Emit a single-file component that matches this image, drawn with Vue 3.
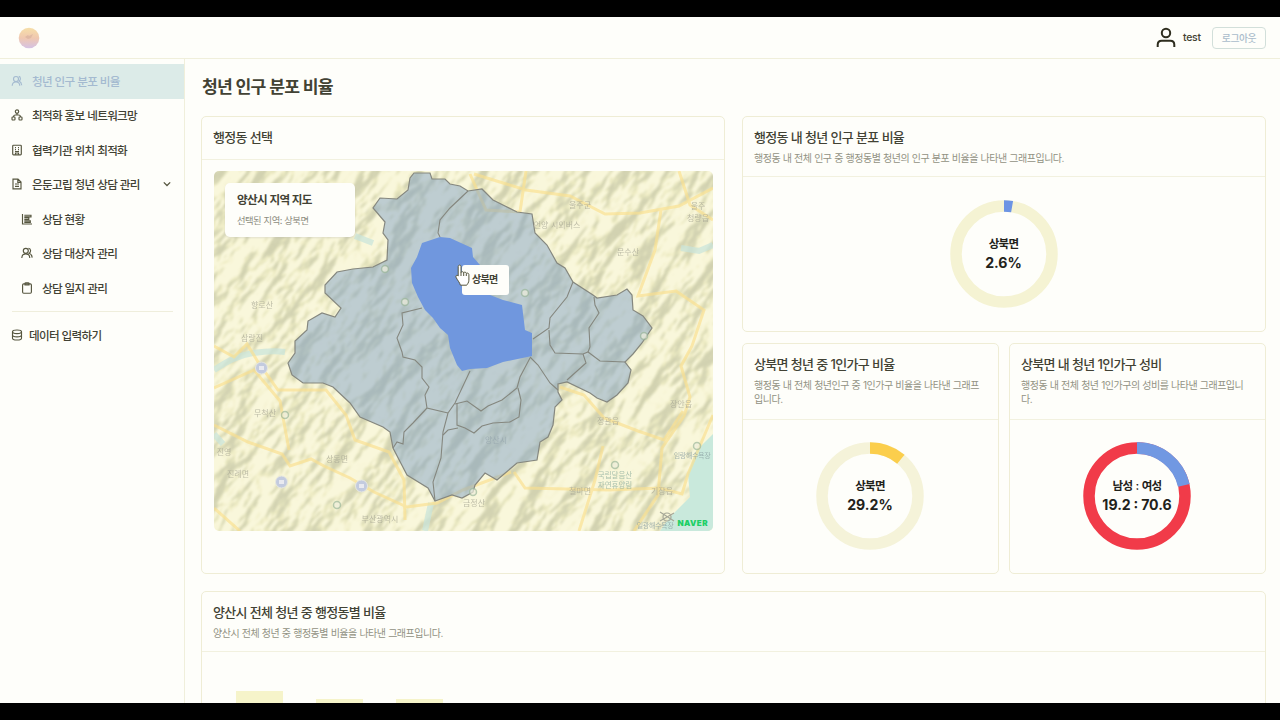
<script setup>
const outer = '414,173 430,173 432,179 445,179 450,184 460,186 468,191 482,189 493,200 505,206 517,212 532,214 535,233 547,245 557,263 565,268 573,282 593,295 597,298 617,295 627,289 632,295 633,310 643,316 652,328 642,343 633,354 625,362 631,370 628,383 617,395 607,402 597,398 590,393 567,382 558,384 558,392 562,400 555,407 553,425 548,437 540,442 537,460 517,463 497,480 485,473 475,485 473,492 462,498 452,495 435,501 428,488 407,475 393,448 390,432 383,427 360,417 350,403 333,387 323,383 303,383 292,375 288,363 295,353 295,341 307,330 308,321 322,313 335,317 341,308 325,293 325,285 337,272 353,269 373,267 387,260 388,240 383,233 385,222 373,208 380,198 397,199 408,190 410,178'
const selected = '440,237 422,243 417,257 411,268 412,283 418,297 425,310 433,318 440,328 448,335 450,348 457,365 462,371 470,369 487,368 503,362 532,356 532,333 525,330 522,305 503,300 490,295 480,265 473,257 472,248 450,238'
const borders = [
  '468,191 450,208 440,220 438,233 440,237',
  '422,308 402,313 403,325 397,338 402,352 403,357 415,360 422,367 422,378 429,387 425,395 427,408 448,413',
  '427,408 413,423 404,432 403,444 397,442 393,448',
  '470,371 455,403 448,413 443,432 441,458 433,482 435,501',
  '455,404 467,401 481,411 488,406 502,400 517,388 520,377 530,358',
  '457,403 457,425 465,428 474,433 482,426 493,423 510,422 519,417 521,400 518,388',
  '443,435 448,430 458,428',
  '530,357 538,365 550,383 558,390',
  '573,282 567,297 550,318 549,328 533,339',
  '549,330 550,345 555,353 583,354 588,352 600,361 625,362',
  '594,297 595,305 599,313 589,328 590,347 588,352',
  '583,354 586,363 567,380',
]
const places = [
  { x: 262, y: 308, t: '향로산' }, { x: 252, y: 341, t: '삼랑진' }, { x: 265, y: 416, t: '무척산' },
  { x: 224, y: 455, t: '진영' }, { x: 238, y: 477, t: '진례면' }, { x: 337, y: 462, t: '상동면' },
  { x: 380, y: 522, t: '부산광역시' }, { x: 580, y: 208, t: '울주군' }, { x: 557, y: 228, t: '언양 시외버스' },
  { x: 628, y: 255, t: '문수산' }, { x: 698, y: 209, t: '울주' }, { x: 698, y: 221, t: '청량읍' },
  { x: 608, y: 424, t: '정관읍' }, { x: 681, y: 407, t: '장안읍' }, { x: 580, y: 494, t: '철마면' },
  { x: 662, y: 494, t: '기장읍' }, { x: 496, y: 443, t: '양산시' }, { x: 474, y: 506, t: '금정산' },
]
const roads = [
  'M214 425L248 442L282 454L290 466L311 459L324 466L350 478L374 492L407 507L437 503L463 490L511 472',
  'M214 346L234 357L247 344L258 362L278 390L326 390L346 415L355 440L389 452L404 480L405 520',
  'M474 174L526 190L570 196L605 214L640 213L679 206L713 188M526 171L520 212L486 210L470 174',
  'M679 171L690 205L713 220M661 210L655 250L638 296L676 291L704 310L692 346L681 366L690 397L684 416L662 448L658 495L634 531',
  'M560 387L584 395L604 418L638 431L664 440L683 411M514 472L525 488L609 490L660 488L682 494L688 474L713 415',
  'M603 446L595 480L579 531M214 388L254 370L280 401L289 450M214 508L240 531',
]
const pins = [[285, 415], [337, 505], [615, 465], [697, 446], [525, 293], [405, 302], [385, 269], [473, 492], [644, 336]]
const bars = [{ h: 12 }, { h: 4 }, { h: 4 }]
const C = 2 * Math.PI * 48
</script>

<template>
  <div class="screen">
    <header class="top">
      <svg class="logo" viewBox="0 0 22 22"><defs><linearGradient id="lg" x2="0" y2="1"><stop offset="0" stop-color="#f6dfa8" /><stop offset=".5" stop-color="#f0c8b0" /><stop offset="1" stop-color="#d5c2e4" /></linearGradient></defs><circle cx="11" cy="11" r="10.3" fill="url(#lg)" /><path d="M7 10l3-2 1 1 4-2-2 4-3 1z" fill="#d9b29f" opacity=".7" /></svg>
      <div class="account">
        <svg class="user" viewBox="0 0 20 22" fill="none" stroke="#2e2d1e" stroke-width="2"><circle cx="10" cy="6" r="4.2" /><path d="M1.7 20v-2.3c0-2.5 1.5-3.9 4-3.9h8.6c2.5 0 4 1.4 4 3.9V20" /></svg>
        <span class="name">test</span>
        <button class="logout">로그아웃</button>
      </div>
    </header>
    <div class="body">
      <nav class="side">
        <div class="item active">
          <svg viewBox="0 0 12 12"><circle cx="5" cy="4" r="2.5" /><path d="M1.2 10.8C1.3 8.4 2.7 7 5 7s3.7 1.4 3.8 3.8M7.8 1.4c2 .3 2.2 3.5.3 4.7 1.7.8 2.4 2 2.6 4.2" /></svg>
          <span>청년 인구 분포 비율</span>
        </div>
        <div class="item">
          <svg viewBox="0 0 12 12"><circle cx="6" cy="2.6" r="1.7" /><rect x="1" y="8" width="3" height="3" rx=".7" /><rect x="8" y="8" width="3" height="3" rx=".7" /><path d="M6 4.3v2M2.5 8c0-1.7.8-2 2-2h3c1.2 0 2 .3 2 2" /></svg>
          <span>최적화 홍보 네트워크망</span>
        </div>
        <div class="item">
          <svg viewBox="0 0 12 12"><rect x="1.7" y="1.2" width="8.6" height="9.6" rx=".8" /><path d="M4 3.6h1M7 3.6h1M4 5.6h1M7 5.6h1M4 7.5h4M4.5 10.8V9h3v1.8" /></svg>
          <span>협력기관 위치 최적화</span>
        </div>
        <div class="item">
          <svg viewBox="0 0 12 12"><path d="M2 1.1h5l3 3v6.8H2zM6.8 1.2v3.1H10M4 6h4M4 8.3h4" /></svg>
          <span>은둔고립 청년 상담 관리</span>
          <svg class="chev" viewBox="0 0 12 12"><path d="M2.8 4.4L6 7.5l3.2-3.1" /></svg>
        </div>
        <div class="item sub">
          <svg viewBox="0 0 12 12"><path d="M1.5 1v10H11M3.3 2.2H10v1.6H3.3M3.3 5h4.5v1.5H3.3M3.3 7.8h6v1.6h-6" /></svg>
          <span>상담 현황</span>
        </div>
        <div class="item sub">
          <svg viewBox="0 0 12 12"><circle cx="4.8" cy="3.8" r="2.5" /><path d="M.8 10.9c.1-2.5 1.6-4 4-4s3.900 1.500 4 4M7.4 1.300c2.600.1 2.900 3.600.7 4.900 2 .7 2.900 2.200 3.100 4.400" /></svg>
          <span>상담 대상자 관리</span>
        </div>
        <div class="item sub">
          <svg viewBox="0 0 12 12"><rect x="1.6" y="1.900" width="8.800" height="9.300" rx="1.100" /><path d="M4 2.900V1.500Q4 .8 4.800.8h2.400q.8 0 .8.7v1.400z" /></svg>
          <span>상담 일지 관리</span>
        </div>
        <div class="rule"></div>
        <div class="item data">
          <svg viewBox="0 0 12 12"><ellipse cx="6" cy="2.800" rx="4.500" ry="1.800" /><path d="M1.500 2.800v6.400c0 1 2 1.800 4.500 1.800s4.500-.8 4.500-1.800V2.800M1.500 6c0 1 2 1.800 4.500 1.800S10.500 7 10.500 6" /></svg>
          <span>데이터 입력하기</span>
        </div>
      </nav>
      <main>
        <h1>청년 인구 분포 비율</h1>
        <div class="row">
          <section class="card region">
            <div class="head single"><h2>행정동 선택</h2></div>
            <div class="map">
              <svg class="terrain" viewBox="214 171 499 360">
                <defs>
                  <filter id="relief" x="0" y="0" width="1" height="1" color-interpolation-filters="sRGB">
                    <feTurbulence type="fractalNoise" baseFrequency=".018 .042" numOctaves="4" seed="11" result="n" />
                    <feDiffuseLighting in="n" surfaceScale="16" diffuseConstant="1.150" lighting-color="#fff"><feDistantLight azimuth="260" elevation="58" /></feDiffuseLighting>
                    <feComponentTransfer><feFuncR type="table" tableValues=".82 .83 .84 .88 .94 .98" /><feFuncG type="table" tableValues=".82 .83 .84 .88 .93 .97" /><feFuncB type="table" tableValues=".69 .70 .71 .73 .77 .86" /></feComponentTransfer>
                    <feGaussianBlur stdDeviation=".8" />
                  </filter>
                </defs>
                <rect x="90" y="10" width="750" height="690" filter="url(#relief)" transform="rotate(-52 463 351)" />
                <path d="M713 434L696 451L688 474L690 497L670 517L660 531H713z" fill="#c9e9dc" />
                <path d="M214 370Q234 356 253 353T285 352M355 236l18 7M681 248l18 3 14-6M431 503l-6 28M214 434l9 10" fill="none" stroke="#c8e4dc" stroke-width="6" opacity=".7" />
                <g fill="none" stroke="#fbe08e" stroke-width="3" opacity=".65"><path v-for="r in roads" :key="r" :d="r" /></g>
                <g class="places"><text v-for="p in places" :key="p.t" :x="p.x" :y="p.y">{{ p.t }}</text></g>
                <g class="badges" fill="#c3cbdf" stroke="#e7e8e0"><circle cx="261.500" cy="368" r="6" /><circle cx="281.500" cy="482" r="6" /><circle cx="361.500" cy="486" r="6" /></g>
                <g fill="#e9eaf0"><rect x="259" y="366" width="5" height="4" /><rect x="279" y="480" width="5" height="4" /><rect x="359" y="484" width="5" height="4" /></g>
                <g class="places green"><text x="615" y="478">국립달음산</text><text x="615" y="488">자연휴양림</text></g>
                <text class="sea" x="692" y="458">임랑해수욕장</text>
                <text class="sea" x="655" y="528">일광해수욕장</text>
                <polygon :points="outer" fill="#7e9fc6" fill-opacity=".48" stroke="#85877f" stroke-width="1.200" />
                <g fill="none" stroke="#85877f" stroke-width="1.100"><polyline v-for="b in borders" :key="b" :points="b" /></g>
                <polygon :points="selected" fill="#7097de" />
                <g fill="#eeeedc" stroke="#9db89c" stroke-width="1.500" opacity=".7"><circle v-for="p in pins" :key="p[0]" :cx="p[0]" :cy="p[1]" r="3.500" /></g>
                <g fill="none" stroke="#a6a797" stroke-width="1.200"><circle cx="667" cy="517" r="4" /><path d="M660 512l14 9M660 521l14-8" /></g>
                <text class="naver" x="677.500" y="526" textLength="30">NAVER</text>
              </svg>
              <div class="info"><strong>양산시 지역 지도</strong><span>선택된 지역: 상북면</span></div>
              <div class="tip">상북면</div>
              <svg class="hand" viewBox="0 0 16 23"><path d="M3.200 12V2.600c0-2 2.800-2 2.800 0v6c.2-1.300 2.600-1.200 2.700.2.500-1 2.500-.8 2.600.6.8-.8 2.600-.2 2.600 1.200v5.600c0 2.400-1.600 4-2.200 5H5.400C4.800 18.500 2.200 16 1 13.200c-.8-1.900 1.200-2.500 2.200-1.200z" fill="#fff" stroke="#56563e" /><path d="M6 8.500V12M8.700 9v3M11.300 9.700V12" stroke="#56563e" /></svg>
            </div>
          </section>
          <div class="stats">
            <section class="card wide">
              <div class="head"><h2>행정동 내 청년 인구 분포 비율</h2><p>행정동 내 전체 인구 중 행정동별 청년의 인구 분포 비율을 나타낸 그래프입니다.</p></div>
              <div class="chart">
                <svg viewBox="0 0 108 108" fill="none" stroke-width="11.500"><circle cx="54" cy="54" r="48" stroke="#f5f3d3" /><circle cx="54" cy="54" r="48" stroke="#6c94e4" :stroke-dasharray="`${C * 0.027} ${C}`" transform="rotate(-90 54 54)" /></svg>
                <div class="label"><b>상북면</b><strong>2.6%</strong></div>
              </div>
            </section>
            <div class="pair">
              <section class="card">
                <div class="head tall"><h2>상북면 청년 중 1인가구 비율</h2><p>행정동 내 전체 청년인구 중 1인가구 비율을 나타낸 그래프<br>입니다.</p></div>
                <div class="chart">
                  <svg viewBox="0 0 108 108" fill="none" stroke-width="11.500"><circle cx="54" cy="54" r="48" stroke="#f5f3d9" /><circle cx="54" cy="54" r="48" stroke="#fbce4c" :stroke-dasharray="`${C * 0.111} ${C}`" transform="rotate(-90 54 54)" /></svg>
                  <div class="label"><b>상북면</b><strong>29.2%</strong></div>
                </div>
              </section>
              <section class="card">
                <div class="head tall"><h2>상북면 내 청년 1인가구 성비</h2><p>행정동 내 전체 청년 1인가구의 성비를 나타낸 그래프입니<br>다.</p></div>
                <div class="chart">
                  <svg viewBox="0 0 108 108" fill="none" stroke-width="11.500"><circle cx="54" cy="54" r="48" stroke="#f13b49" /><circle cx="54" cy="54" r="48" stroke="#7198e2" stroke-width="12" :stroke-dasharray="`${C * 0.214} ${C}`" transform="rotate(-90 54 54)" /></svg>
                  <div class="label"><b>남성 : 여성</b><strong class="ratio">19.2 : 70.6</strong></div>
                </div>
              </section>
            </div>
          </div>
        </div>
        <section class="card total">
          <div class="head"><h2>양산시 전체 청년 중 행정동별 비율</h2><p>양산시 전체 청년 중 행정동별 비율을 나타낸 그래프입니다.</p></div>
          <div class="bars"><i v-for="(b, i) in bars" :key="i" :style="{ height: b.h + 'px' }"></i></div>
        </section>
      </main>
    </div>
  </div>
</template>

<style>
body { background: #000; overflow: hidden; }
</style>
<style scoped>
* { box-sizing: border-box; }
.screen { width: 1280px; height: 720px; border: solid #000; border-width: 17px 0; background: #fefefa; display: flex; flex-direction: column; overflow: hidden; font-family: Inter, "Noto Sans CJK KR", sans-serif; color: #424234; letter-spacing: -.7px; word-spacing: .3px; }
.top { height: 42px; flex: none; border-bottom: 1px solid #f0efdb; display: flex; justify-content: space-between; align-items: center; padding: 0 14px 0 18px; }
.logo { width: 22px; height: 22px; }
.account { display: flex; align-items: center; }
.user { width: 20px; height: 22px; margin-right: 7px; }
.name { font-size: 10.500px; font-weight: 500; width: 29px; letter-spacing: -.3px; }
.logout { width: 54px; height: 22px; padding: 0; border: 1px solid #d2dfda; border-radius: 4px; background: transparent; color: #aabccb; font: 500 9.800px Inter, "Noto Sans CJK KR", sans-serif; letter-spacing: -.4px; }
.body { flex: 1; display: flex; min-height: 0; }
.side { width: 185px; flex: none; border-right: 1px solid #f0efdb; padding-top: 5px; }
.item { height: 34.500px; display: flex; align-items: center; padding: 0 0 1px 11px; font-size: 11.600px; font-weight: 500; white-space: nowrap; letter-spacing: -.7px; }
.item svg { width: 12px; height: 12px; margin-right: 9px; fill: none; stroke: #56563f; stroke-width: 1.150; flex: none; }
.item.active { background: #dcebe8; color: #a4bad0; padding-bottom: 0; }
.item.active svg { stroke: #a4bad0; }
.item.sub { padding-left: 21px; }
.item .chev { margin: 0 11px 0 auto; stroke-width: 1.300; }
.rule { height: 1px; background: #efeedc; margin: 5px 11px 7px 12px; }
.item.data svg { margin-right: 6px; }
main { flex: 1; padding: 0 14px 0 17px; min-width: 0; display: flex; flex-direction: column; }
h1 { margin: 0; height: 57px; flex: none; font-size: 17.200px; line-height: 56px; font-weight: 700; letter-spacing: -.8px; }
.row { display: flex; gap: 17px; height: 458px; flex: none; }
.card { border: 1px solid #efedd5; border-radius: 5px; display: flex; flex-direction: column; }
.region { width: 524px; margin-left: -1px; flex: none; }
.head { height: 60px; flex: none; border-bottom: 1px solid #f2f1df; padding: 11px 11px 0; }
.head.single { height: 43px; }
.head.tall { height: 76px; }
h2 { margin: 0; font-size: 13px; line-height: 18px; font-weight: 500; white-space: nowrap; letter-spacing: -.72px; }
p { margin: 5px 0 0; font-size: 10px; line-height: 14px; color: #929283; white-space: nowrap; letter-spacing: -.49px; }
.map { position: relative; width: 499px; height: 360px; margin: 11px 0 0 12px; border-radius: 5px; overflow: hidden; }
.terrain { display: block; width: 499px; height: 360px; }
.places text, .sea { font-size: 8px; text-anchor: middle; fill: #aaa996; letter-spacing: 0; opacity: .75; }
.places.green text { fill: #8eae9e; font-size: 7.500px; }
.sea { fill: #899ea1; font-size: 7px; letter-spacing: -.35px; }
.naver { font-size: 8px; font-weight: 900; fill: #20cf65; letter-spacing: 0; }
.info { position: absolute; left: 11px; top: 12px; width: 130px; height: 54px; border-radius: 5px; background: #fefefa; padding: 9px 12px; display: flex; flex-direction: column; box-shadow: 0 1px 2px #aaa4; }
.info strong { font-size: 11.600px; line-height: 16px; font-weight: 600; letter-spacing: -.7px; }
.info span { font-size: 9.300px; line-height: 14px; color: #8c8c7e; margin-top: 6px; letter-spacing: -.5px; }
.tip { position: absolute; left: 248px; top: 94px; width: 47px; height: 30px; border-radius: 3px; background: #fefefa; font-size: 10px; line-height: 29px; font-weight: 600; padding-left: 10px; }
.hand { position: absolute; left: 241px; top: 93px; width: 16px; height: 23px; fill: none; }
.stats { flex: 1; display: flex; flex-direction: column; gap: 11px; min-width: 0; }
.wide { height: 216px; }
.pair { height: 231px; display: grid; grid-template-columns: 257px 257px; gap: 10px; }
.chart { flex: 1; display: grid; place-items: center; margin-right: 1px; }
.pair .chart { padding-bottom: 1px; }
.chart > * { grid-area: 1 / 1; }
.chart svg { width: 108px; height: 108px; }
.label { display: flex; flex-direction: column; align-items: center; color: #22221a; }
.label b { font-size: 11.500px; line-height: 17px; font-weight: 600; word-spacing: 1px; }
.label strong { font-size: 14.100px; line-height: 19px; font-weight: 700; letter-spacing: 0; }
.label .ratio { word-spacing: -.5px; }
.total { height: 180px; margin: 17px 0 0 -1px; flex: none; }
.bars { height: 51px; display: flex; align-items: flex-end; gap: 33px; padding-left: 34px; }
.bars i { width: 47px; background: #f6f4ca; }
</style>
